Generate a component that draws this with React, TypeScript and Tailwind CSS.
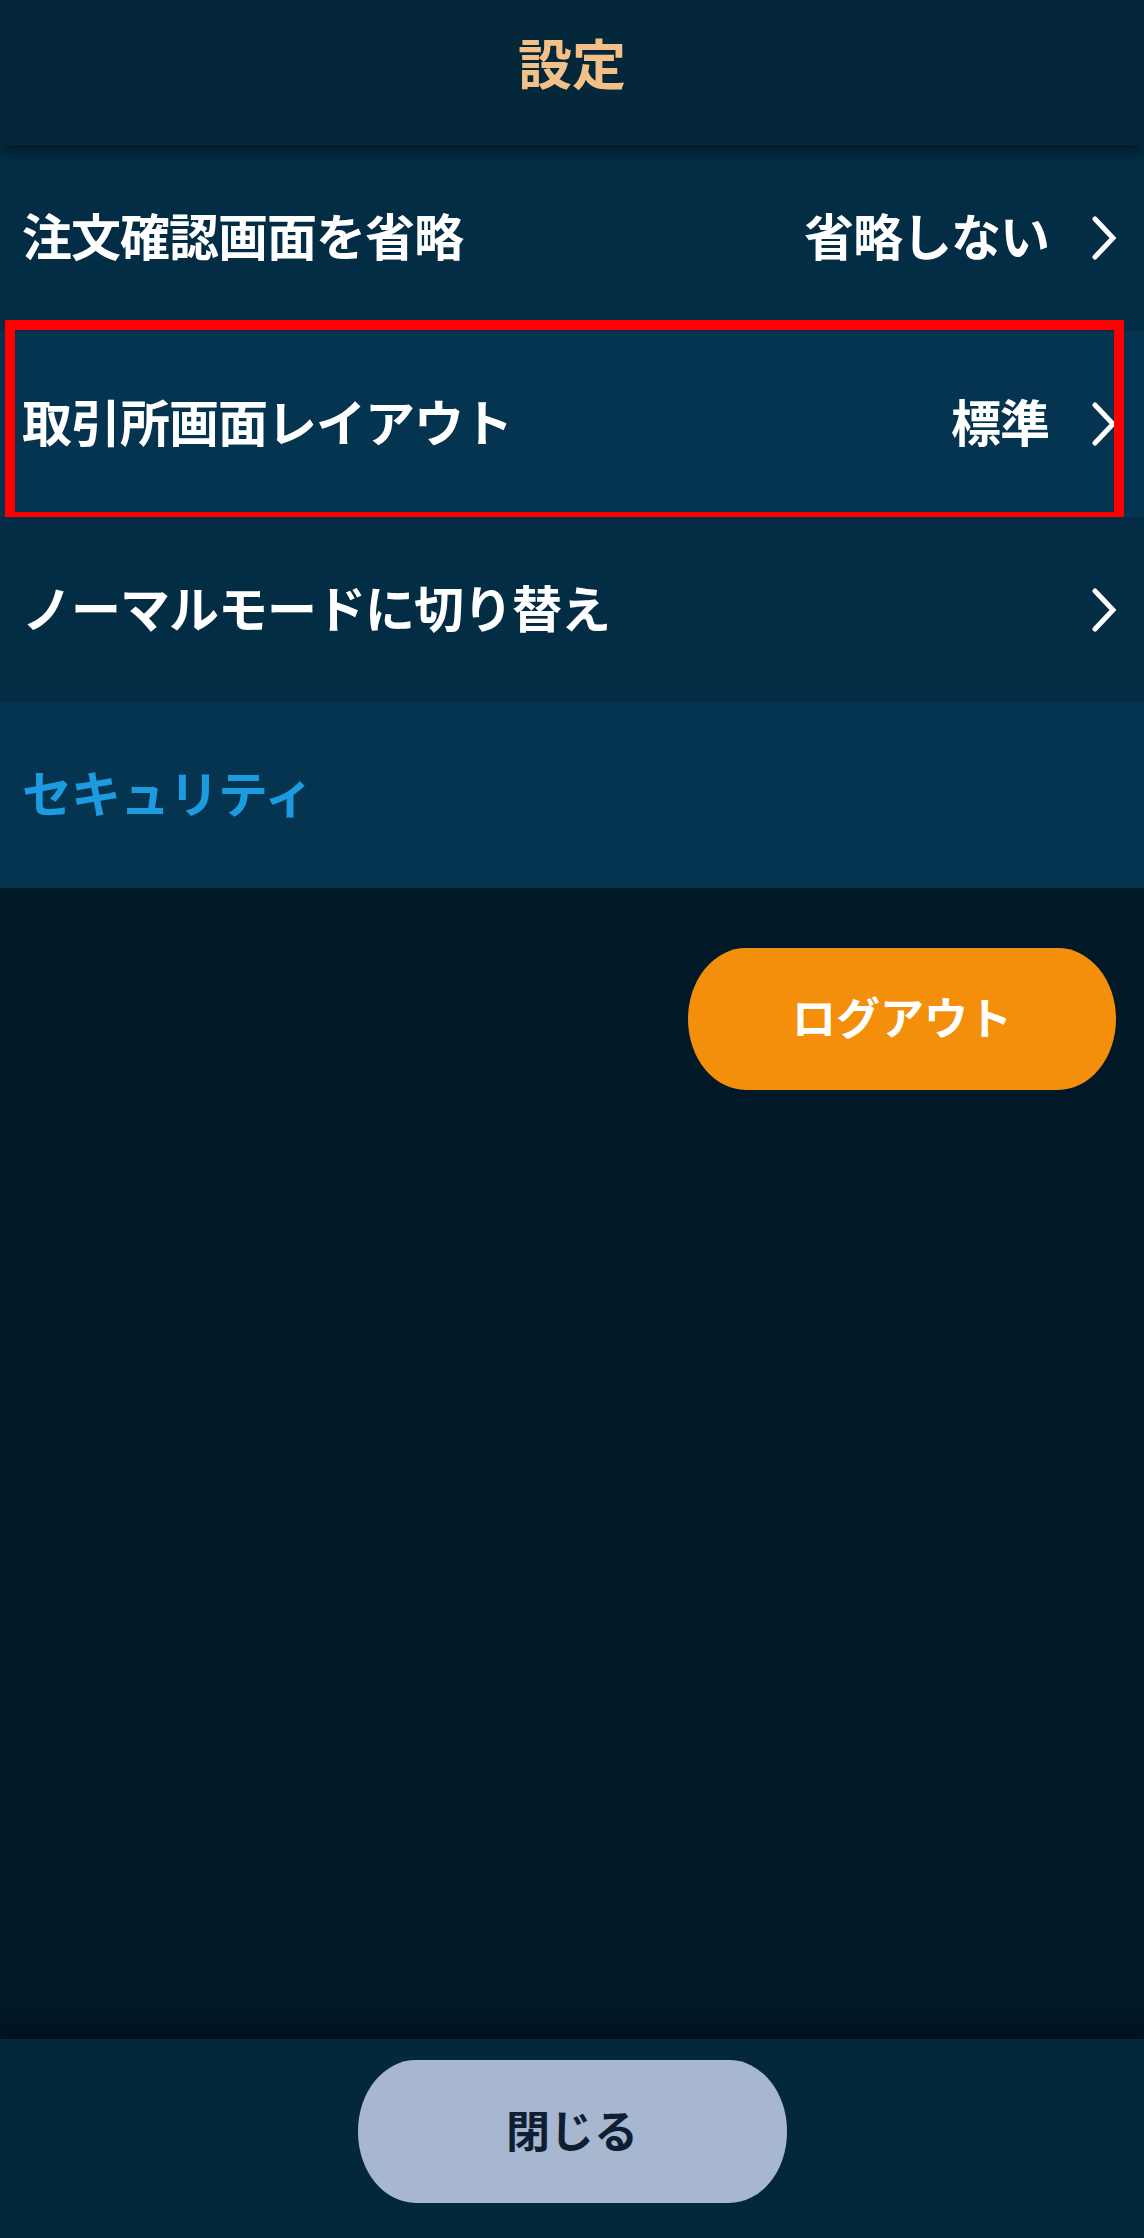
import React from 'react';

const font = { fontFamily: '"Noto Sans CJK JP", "Noto Sans", sans-serif' };

function Chevron() {
  return (
    <svg width="26" height="44" viewBox="0 0 26 44" fill="none" className="shrink-0">
      <polyline
        points="4,3 22,22 4,41"
        stroke="#ffffff"
        strokeWidth="5"
        strokeLinecap="round"
        strokeLinejoin="miter"
      />
    </svg>
  );
}

interface RowProps {
  label: string;
  value?: string;
  highlight?: boolean;
}

function SettingRow({ label, value, highlight }: RowProps) {
  return (
    <div className={`relative h-[186px] flex items-center pl-[22px] pr-[27px] ${highlight ? 'bg-[#04344f]' : 'bg-[#032d45]'}`}>
      <div className="flex-1 text-white text-[50px] font-bold tracking-[-1px] pb-[8px]">{label}</div>
      {value && <div className="text-white text-[50px] font-bold tracking-[-1px] mr-[42px] pb-[8px]">{value}</div>}
      <Chevron />
      {highlight && (
        <div className="absolute top-[-11px] bottom-[-5px] left-[5px] right-[20px] border-[10px] border-[#ff0000] pointer-events-none"></div>
      )}
    </div>
  );
}

export default function App() {
  return (
    <div className="w-[1144px] h-[2238px] flex flex-col bg-[#011827] overflow-hidden" style={font}>
      {/* Header */}
      <div className="relative z-10 h-[145px] shrink-0 bg-[#042739] flex items-center justify-center shadow-[0_6px_14px_rgba(0,0,0,0.45)]">
        <div className="text-[54px] font-bold text-[#f3c188] pb-[22px]">設定</div>
      </div>

      {/* Settings list */}
      <SettingRow label="注文確認画面を省略" value="省略しない" />
      <SettingRow label="取引所画面レイアウト" value="標準" highlight />
      <SettingRow label="ノーマルモードに切り替え" />

      {/* Section */}
      <div className="h-[185px] shrink-0 bg-[#04344f] flex items-center pl-[22px]">
        <div className="text-[50px] font-bold text-[#1d9be0] tracking-[-1px] pb-[8px]">セキュリティ</div>
      </div>

      {/* Body */}
      <div className="flex-1 flex flex-col items-end pt-[60px] pr-[28px]">
        <button className="w-[428px] h-[142px] rounded-[58px/71px] bg-[#f48f0c] text-white text-[44px] font-bold pb-[6px]">
          ログアウト
        </button>
      </div>

      {/* Footer */}
      <div className="relative h-[199px] shrink-0 bg-[#03283b] flex justify-center pt-[21px] shadow-[0_-10px_18px_rgba(0,0,0,0.35)]">
        <button className="w-[429px] h-[143px] rounded-[58px/71px] bg-[#a6b7cf] text-[#0f1e33] text-[44px] font-bold pb-[6px]">
          閉じる
        </button>
      </div>
    </div>
  );
}
